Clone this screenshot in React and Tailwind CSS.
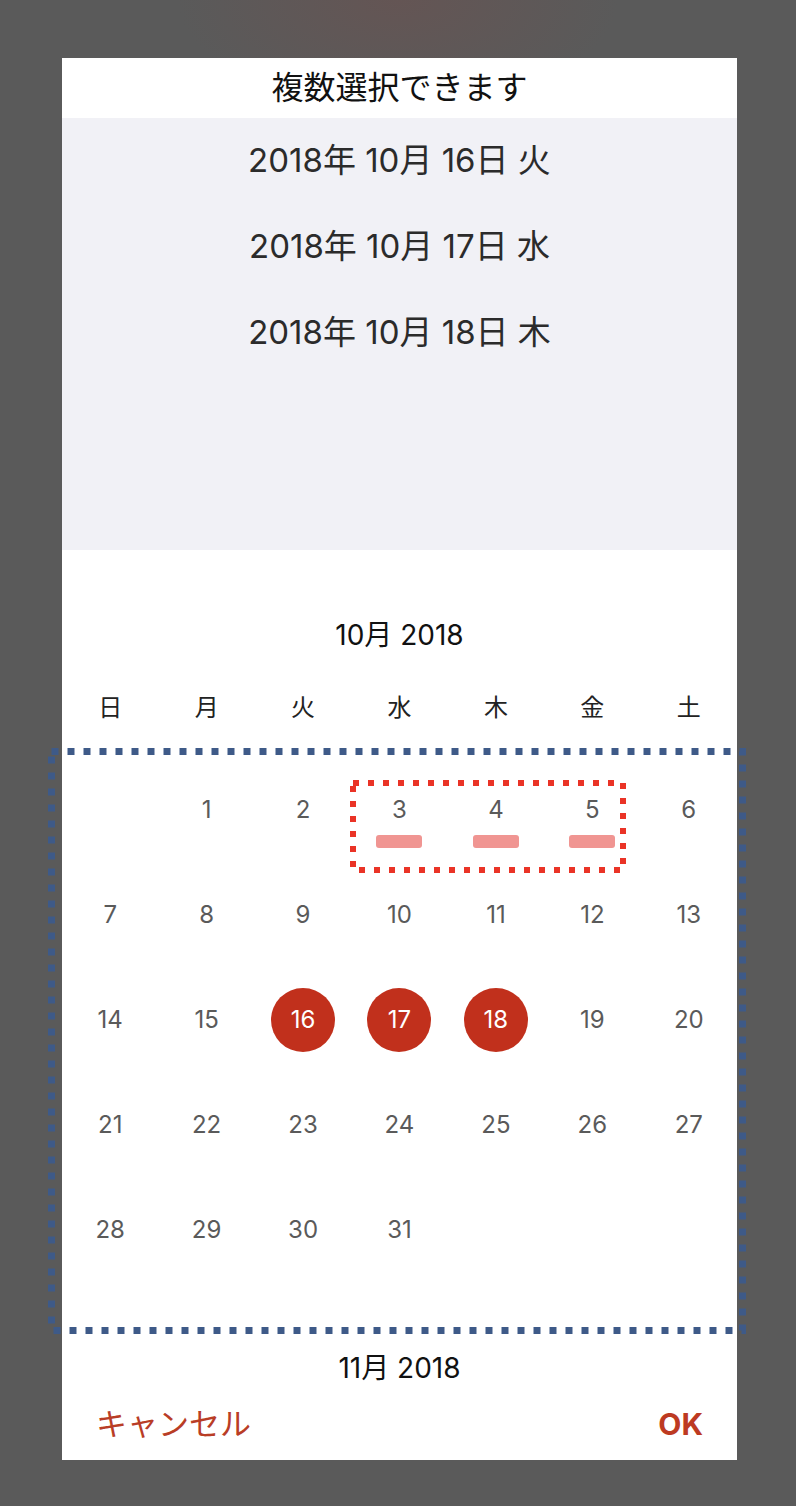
import React from 'react';

const FONT = "font-['Inter','Noto_Sans_CJK_JP',sans-serif]";

const selectedDates = ['2018年 10月 16日 火', '2018年 10月 17日 水', '2018年 10月 18日 木'];
const weekdays = ['日', '月', '火', '水', '木', '金', '土'];

// October 2018 starts on a Monday
const weeks = [
  [null, 1, 2, 3, 4, 5, 6],
  [7, 8, 9, 10, 11, 12, 13],
  [14, 15, 16, 17, 18, 19, 20],
  [21, 22, 23, 24, 25, 26, 27],
  [28, 29, 30, 31, null, null, null],
];
const picked = [16, 17, 18];
const marked = [3, 4, 5];

function DayCell({ day }) {
  if (!day) return <div className="h-[105px]" />;
  const isPicked = picked.includes(day);
  return (
    <div className="h-[105px] relative flex items-center justify-center">
      {isPicked ? (
        <div className="w-[64px] h-[64px] rounded-full bg-[#c1301c] flex items-center justify-center text-white text-[24px]">
          {day}
        </div>
      ) : (
        <span className="text-[24px] text-[#5a5a5a]">{day}</span>
      )}
      {marked.includes(day) && (
        <div className="absolute left-1/2 -translate-x-1/2 top-[78px] w-[46px] h-[13px] rounded-[3px] bg-[#f09592]" />
      )}
    </div>
  );
}

export default function App() {
  return (
    <div className={`${FONT} relative w-[796px] h-[1506px] overflow-hidden bg-[#5a5a5a] bg-[radial-gradient(ellipse_220px_110px_at_50%_0%,#645554,#5a5a5a)] pt-[58px] pl-[62px]`}>
      <div className="w-[675px] h-[1402px] bg-white flex flex-col">
        {/* Header */}
        <div className="h-[60px] flex items-center justify-center text-[32px] text-[#111] leading-none">
          複数選択できます
        </div>

        {/* Selected list */}
        <div className="h-[432px] bg-[#f1f1f6]">
          {selectedDates.map((d) => (
            <div key={d} className="h-[86px] flex items-center justify-center text-[33px] text-[#2b2b2b]">
              {d}
            </div>
          ))}
        </div>

        {/* Calendar */}
        <div className="pt-[65px] h-[40px] box-content flex items-center justify-center text-[28px] text-[#111]">
          10月 2018
        </div>
        <div className="mt-[33px] grid grid-cols-7 h-[40px] items-center text-center text-[24px] text-[#222]">
          {weekdays.map((w) => (
            <span key={w}>{w}</span>
          ))}
        </div>
        <div className="mt-[29px] flex flex-col">
          {weeks.map((week, i) => (
            <div key={i} className="grid grid-cols-7">
              {week.map((day, j) => (
                <DayCell key={j} day={day} />
              ))}
            </div>
          ))}
        </div>

        <div className="mt-[66px] h-[40px] flex items-center justify-center text-[28px] text-[#111]">
          11月 2018
        </div>

        {/* Actions */}
        <div className="mt-[16px] h-[40px] flex items-center justify-between px-[34px]">
          <span className="text-[31px] text-[#b93d26]">キャンセル</span>
          <span className="text-[30px] font-bold text-[#bd3a22]">OK</span>
        </div>
      </div>

      {/* annotation: blue dotted frame around the grid */}
      <svg className="absolute left-[48px] top-[748px]" width="698" height="586">
        <rect x="3.5" y="3.5" width="691" height="579" fill="none" stroke="#3e5a88" strokeWidth="7" strokeDasharray="7 9" />
      </svg>

      {/* annotation: red dotted frame around 3-5 */}
      <svg className="absolute left-[350px] top-[780px]" width="276" height="93">
        <rect x="3" y="3" width="270" height="87" fill="none" stroke="#ea3326" strokeWidth="6" strokeDasharray="6 9" />
      </svg>
    </div>
  );
}
